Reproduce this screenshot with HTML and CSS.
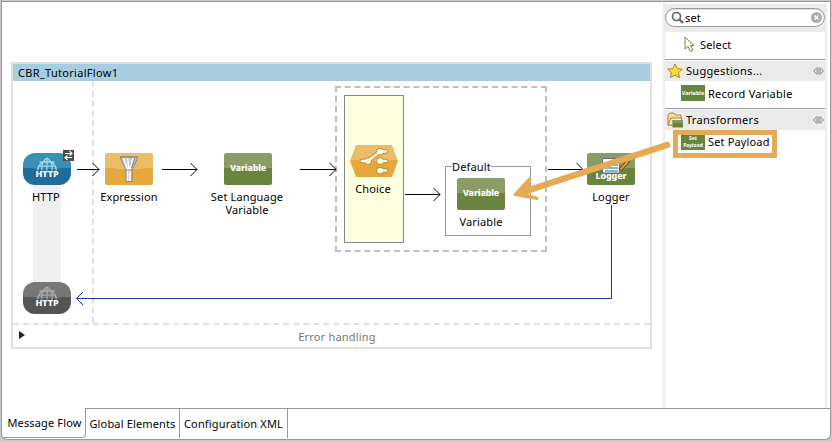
FILE: index.html
```html
<!DOCTYPE html>
<html lang="en">
<head>
<meta charset="utf-8">
<title>Message Flow</title>
<link rel="stylesheet" href="styles.css">
</head>
<body>
<svg class="defs" width="0" height="0" aria-hidden="true">
  <defs>
    <symbol id="globe" viewBox="0 0 20 14"><path d="M.7 13.500A9.300 9.300 0 0 1 19.300 13.500M10 .7V13.500M10 1C4.500 4 4.500 12 5 13.500M10 1C15.500 4 15.500 12 15 13.500M2.500 5H17.500M1 9.200H19" fill="none" stroke="currentColor" stroke-width="1.300"/></symbol>
    <symbol id="pin" viewBox="0 0 11 10"><path d="M4 1.500 .7 5 4 8.500 5.500 7M7 1.500 10.300 5 7 8.500 5.500 7M4 1.500 5.500 3 7 1.500M3 4H8M3 6H8" fill="none" stroke="#777" stroke-width=".9"/></symbol>
  </defs>
</svg>
<div class="window">
  <div class="titleline"></div>
  <main class="content">
    <section class="canvas">
      <div class="flow">
        <header class="flow-title">CBR_TutorialFlow1</header>
        <div class="flow-body"><div class="source"></div></div>
        <footer class="errors"><span class="twisty"></span>Error handling</footer>
      </div>
      <div class="response-bar"></div>
      <div class="scope">
        <div class="choice-lane"></div>
      </div>
      <div class="route"><span class="route-name">Default</span></div>

      <svg class="edges" width="664" height="406" fill="none">
        <g stroke="#000"><path d="M77 169.500H99M92.500 163l6.500 6.500-6.500 6.500M162 169.500H197M190.500 163l6.500 6.500-6.500 6.500M300 169.500H336M329.500 163l6.500 6.500-6.500 6.500M405 194.500H440M433.500 188l6.500 6.500-6.500 6.500M548 169.500H583M576.500 163l6.500 6.500-6.500 6.500"/></g>
        <path stroke="#1a35b0" d="M611.500 205V298.500H77M83 292l-6.500 6.500 6.500 6.500"/>
      </svg>

      <div class="node http"><svg class="globe"><use href="#globe"/></svg><b>HTTP</b></div>
      <svg class="badge" width="11" height="11"><path fill="#4b4b4b" d="M0 0h11v11H0z"/><path d="M2 3.500H9M6.500 1l2.500 2.500-2.500 2M9 7.500H2M4.500 5.500l-2.500 2 2.500 2.500" fill="none" stroke="#fff" stroke-width="1.200"/></svg>
      <div class="label l-http">HTTP</div>
      <div class="node http reply"><svg class="globe"><use href="#globe"/></svg><b>HTTP</b></div>

      <div class="node expression"><svg width="48" height="32"><path d="M15 4H33L27 17V28.500H21V17Z" fill="#c8c8c8" stroke="#8c8579"/><path d="M18.500 5 22.500 17V28M22.500 5 24 17M28 5 25 17V28" fill="none" stroke="#fff" stroke-width="1.500"/><path d="M15 4H33M30 5 26.500 15M20.500 17H27.500" fill="none" stroke="#858585"/></svg></div>
      <div class="label l-expression">Expression</div>

      <div class="node variable v-language"><b>Variable</b></div>
      <div class="label l-language"><span>Set Language</span><span>Variable</span></div>

      <div class="node choice"><svg width="48" height="32" fill="none" stroke-linecap="round"><g stroke="#c18a31" stroke-width="4.500"><path d="M12 16H18L30 6.500H36M29 16H36M29 25.500H36"/><path stroke-width="7.500" d="M18 16h.1M30 6.500h.1M30 16h.1M30 25.500h.1"/></g><g stroke="#fffbe0" stroke-width="2.700"><path d="M12 16H18L30 6.500H36M29 16H36M29 25.500H36"/><path stroke-width="5.700" d="M18 16h.1M30 6.500h.1M30 16h.1M30 25.500h.1"/></g></svg></div>
      <div class="label l-choice">Choice</div>

      <div class="node variable v-default"><b>Variable</b></div>
      <div class="label l-default">Variable</div>

      <div class="node variable logger"><svg width="48" height="32"><path d="M15.500 5.500H32.500V20H15.500Z" fill="#fff" stroke="#596b7d"/><path d="M18 12H31M18 15H31M18 18H31" stroke="#5aa0bd" stroke-width="1.500"/><path d="M33 17 41.500 8" stroke="#674d25" stroke-width="4"/><path d="M33.500 16.500 41 8.500" stroke="#e4a42e" stroke-width="2"/></svg><b>Logger</b></div>
      <div class="label l-logger">Logger</div>
    </section>

    <aside class="palette">
      <div class="search-row"><div class="search">
        <svg width="14" height="14"><circle cx="5.500" cy="5.500" r="4" fill="none" stroke="#666" stroke-width="1.700"/><path d="M8.500 8.500 12 12" stroke="#666" stroke-width="2.300"/></svg>
        <span class="query">set</span>
        <svg width="11" height="11"><circle cx="5.500" cy="5.500" r="5.500" fill="#aaa"/><path d="M3.500 3.500 7.500 7.500M7.500 3.500 3.500 7.500" stroke="#fff" stroke-width="1.400"/></svg>
      </div></div>
      <div class="item select"><svg width="11" height="17"><path d="M1 1V13L4 10.500 6.500 15.500 9 14.500 6.500 9.500H10Z" fill="#ffffe0" stroke="#807e68"/></svg>Select</div>
      <div class="group"><svg width="16" height="16"><path d="M8 1 10.200 5.600 15.300 6.200 11.500 9.700 12.600 14.700 8 12.200 3.400 14.700 4.500 9.700.7 6.200 5.800 5.600Z" fill="#fbdc35" stroke="#c57f22"/></svg><span>Suggestions...</span><svg class="pin"><use href="#pin"/></svg></div>
      <div class="item record"><span class="chip">Variable</span>Record Variable</div>
      <div class="group"><svg width="16" height="16"><path d="M1 13V2.500L3 1H7L8.500 3H14V13Z" fill="#f6dca0" stroke="#b4803e"/><path d="M1 13 4 6H15L13 13Z" fill="#ffedb8" stroke="#b4803e"/><path d="M5.500 8H16V15.500H5.500Z" fill="#68823c"/><path d="M5.500 8H16V11H5.500Z" fill="#85985e"/></svg><span>Transformers</span><svg class="pin"><use href="#pin"/></svg></div>
      <div class="item payload"><span class="chip two"><span>Set</span><span>Payload</span></span>Set Payload</div>
    </aside>
  </main>
  <nav class="tabs"><div class="tab active">Message Flow</div><div class="tab elements">Global Elements</div><div class="tab config">Configuration XML</div><div class="rest"></div></nav>
</div>
<svg class="callout" width="832" height="442" fill="none" stroke="#e4aa55"><path stroke-width="5" d="M675.500 132.500H774.500V155.500H675.500Z"/><path stroke-width="6.500" stroke-linecap="round" d="M667 145 523 192"/><path fill="#e4aa55" stroke-width="3" stroke-linejoin="round" d="M515 194.500 530 178.500 528 189 526 195 537 198.500Z"/></svg>
</body>
</html>
```

FILE: styles.css
```css
* { box-sizing: border-box; }
body {
  margin: 0; width: 832px; height: 442px; overflow: hidden;
  background: #c9c9c9; color: #000;
  font: 11px/13px "Noto Sans", "Open Sans", sans-serif;
  letter-spacing: .15px;
}
svg { display: block; flex: none; }
.defs { position: absolute; }
.window {
  width: 830px; height: 440px; margin-left: 1px; background: #fff;
  border: 1px solid #999; border-top: 0; border-radius: 0 0 6px 6px;
  display: flex; flex-direction: column; overflow: hidden;
}
.titleline { height: 2px; background: #ccc; border-bottom: 1px solid #999; flex: none; }
.content { height: 406px; display: flex; margin-left: -2px; flex: none; }
.canvas { width: 664px; padding: 60px 0 0 11px; }
.flow { width: 641px; height: 287px; border: 2px solid #e0e0e0; display: flex; flex-direction: column; }
.flow-title { height: 17px; background: #a8cde1; padding: 2px 5px; letter-spacing: .3px; }
.flow-body { flex: 1; border-bottom: 2px dashed #e0e0e0; }
.source { width: 81px; height: 100%; border-right: 2px dashed #e0e0e0; }
.errors { height: 22px; display: flex; align-items: center; justify-content: center; padding-left: 11px; color: #777; position: relative; letter-spacing: .2px; }
.twisty { position: absolute; left: 6px; top: 6px; border: 4px solid transparent; border-left: 6px solid #222; border-right: 0; }

.node, .label, .badge, .edges, .response-bar, .scope, .route, .callout { position: absolute; }
.edges, .callout { left: 0; top: 0; }
.response-bar { left: 33px; top: 170px; width: 28px; height: 120px; background: #f0f0f0; }
.scope { left: 335px; top: 86px; width: 212px; height: 166px; border: 2px dashed #bfbfbf; padding: 7px; }
.choice-lane { width: 60px; height: 148px; background: #ffffe1; border: 1px solid #888; }
.route { left: 445px; top: 166px; width: 86px; height: 70px; border: 1px solid #999; }
.route-name { display: block; width: 39px; margin: -7px 0 0 6px; background: #fff; white-space: nowrap; }
.node { width: 48px; height: 32px; border-radius: 2px; overflow: hidden; color: #fff; }
.node b { position: absolute; left: 0; right: 0; text-align: center; letter-spacing: 0; font-weight: 800; }
.http { left: 23px; top: 153px; border-radius: 12px; background: radial-gradient(ellipse 60px 16px at 50% 0, #3b8fb4 98%, #216c9a 100%); }
.http b { top: 15px; font-size: 9px; line-height: 12px; }
.globe { width: 20px; height: 14px; margin: 4px auto 0; color: #9cd4ef; }
.reply { top: 282px; background: radial-gradient(ellipse 60px 16px at 50% 0, #777 98%, #545454 100%); }
.reply .globe { color: #aaa; }
.badge { left: 63px; top: 150px; }
.expression { left: 105px; top: 153px; background: radial-gradient(ellipse 65px 16px at 50% 0, #ecbd69 98%, #e5a83d 100%); }
.variable { background: radial-gradient(ellipse 65px 16px at 50% 0, #8a9d66 98%, #69843e 100%); }
.variable b { top: 9px; font-size: 9px; line-height: 12px; letter-spacing: -.2px; }
.v-language { left: 224px; top: 153px; }
.v-default { left: 457px; top: 178px; }
.choice { left: 350px; top: 145px; clip-path: polygon(6px 0, 42px 0, 48px 16px, 42px 32px, 6px 32px, 0 16px); background: radial-gradient(ellipse 65px 16px at 50% 0, #ecbd69 98%, #e5a83d 100%); }
.logger { left: 587px; top: 153px; }
.variable.logger b { top: 17px; font-size: 9px; letter-spacing: -.1px; }
.label { text-align: center; width: 90px; white-space: nowrap; display: flex; flex-direction: column; }
.l-http { left: 1px; top: 190px; }
.l-expression { left: 84px; top: 190px; }
.l-language { left: 202px; top: 190px; }
.l-choice { left: 328px; top: 182px; }
.l-default { left: 436px; top: 215px; }
.l-logger { left: 566px; top: 190px; }

.palette { width: 164px; border: solid #ebebeb; border-width: 0 2px; margin-left: -1px; padding-top: 2px; }
.search-row { height: 28px; background: #ebebeb; padding: 4px 0 0; }
.search { height: 19px; border: 1px solid #999; border-radius: 10px; background: #fff; display: flex; align-items: center; padding: 0 2px 0 5px; box-shadow: inset 0 1px 1px #ddd; }
.query { flex: 1; }
.item { display: flex; align-items: center; white-space: nowrap; }
.select { height: 27px; padding: 0 0 3px 19px; gap: 5px; }
.group { height: 22px; border-top: 1px solid #999; background: #ebebeb; display: flex; align-items: center; padding: 0 1px 0 2px; gap: 3px; box-shadow: inset 0 1px #fff; }
.group span { flex: 1; letter-spacing: .3px; }
.pin { width: 11px; height: 10px; }
.record { height: 27px; padding: 0 0 3px 16px; gap: 3px; letter-spacing: .25px; }
.payload { height: 23px; padding-left: 16px; gap: 3px; }
.chip { width: 24px; height: 16px; background: #69843e; color: #fff; font: bold 5.500px/16px "Noto Sans", sans-serif; letter-spacing: 0; text-align: center; }
.chip.two { display: flex; flex-direction: column; justify-content: center; font-size: 5px; line-height: 7px; }

.tabs { height: 30px; display: flex; flex: none; }
.tab { border-right: 1px solid #999; border-top: 1px solid #999; display: flex; align-items: center; justify-content: center; white-space: nowrap; }
.active { width: 84px; padding-left: 2px; border-top: 0; border-bottom: 1px solid #999; border-bottom-right-radius: 4px; }
.elements { width: 94px; }
.config { width: 108px; }
.rest { flex: 1; border-top: 1px solid #999; }
```
